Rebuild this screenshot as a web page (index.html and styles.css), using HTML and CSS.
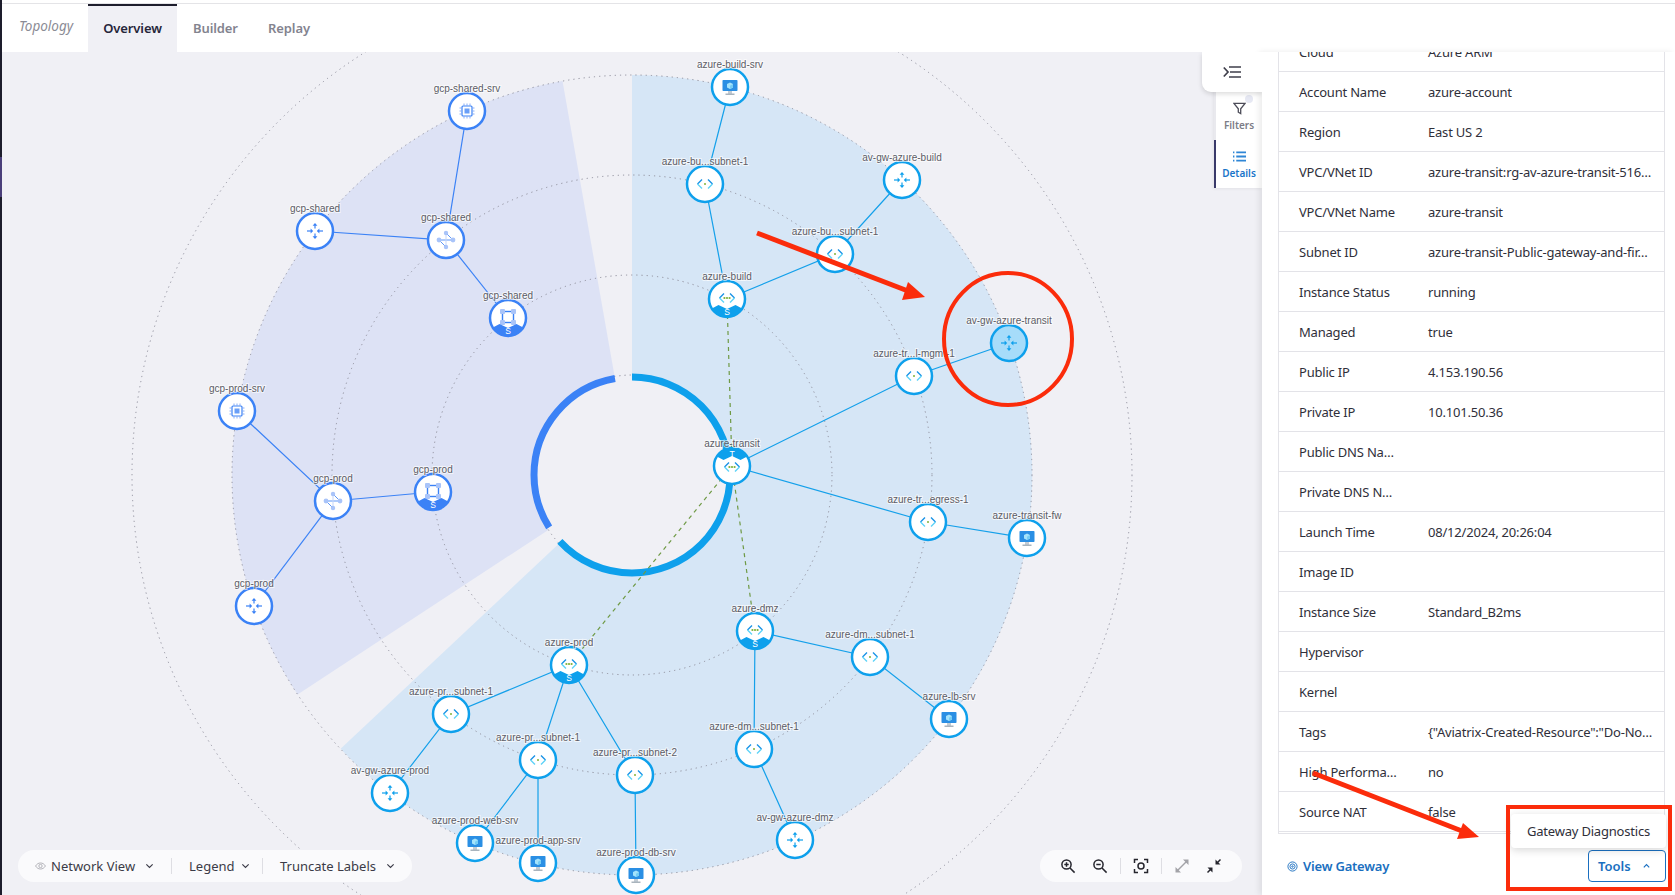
FILE: index.html
```html
<!DOCTYPE html>
<html lang="en">
<head>
    <meta charset="UTF-8">
    <meta name="viewport" content="width=device-width, initial-scale=1.0">
    <title>Topology</title>
    <link rel="stylesheet" href="styles.css">
</head>
<body>
    <div class="strip"></div>
    <div class="page">
        <nav class="tabs">
            <span class="tabs-title">Topology</span>
            <a class="tab active">Overview</a>
            <a class="tab">Builder</a>
            <a class="tab">Replay</a>
        </nav>

        <div class="main">
            <div class="canvas">
                <svg class="graph" viewBox="2 52 1260 843">
                    <defs>
                        <clipPath id="node-clip"><circle r="18"/></clipPath>

                        <g id="i-router" fill="currentColor" stroke="none">
                            <rect x="-0.6" y="-7" width="1.2" height="4.5"/><path d="M-2.4-5.2 0-8 2.4-5.2Z"/>
                            <rect x="-0.6" y="2.5" width="1.2" height="4.5"/><path d="M-2.4 5.2 0 8 2.4 5.2Z"/>
                            <rect x="-8" y="-0.6" width="4.5" height="1.2"/><path d="M-4.4-2.4-1.8 0-4.4 2.4Z"/>
                            <rect x="3.5" y="-0.6" width="4.5" height="1.2"/><path d="M4.4-2.4 1.8 0 4.4 2.4Z"/>
                        </g>
                        <g id="i-chevrons" fill="none" stroke-width="1.4">
                            <path d="M-3-4.5-7.5 0M3-4.5 7.5 0" stroke="#1b93e6"/>
                            <path d="M-7.5 0-3 4.5M7.5 0 3 4.5" stroke="#5fd3f7"/>
                        </g>
                        <g id="i-subnet">
                            <use href="#i-chevrons"/>
                            <circle r="1" fill="#7fb23a"/>
                        </g>
                        <g id="i-vnet">
                            <use href="#i-chevrons"/>
                            <circle cx="-2.6" r="1.1" fill="#7fb23a"/>
                            <circle r="1.1" fill="#7fb23a"/>
                            <circle cx="2.6" r="1.1" fill="#7fb23a"/>
                        </g>
                        <g id="i-server">
                            <rect x="-2" y="4" width="4" height="3" fill="#c3ccd4"/>
                            <rect x="-4.5" y="6.5" width="9" height="1.5" fill="#a9b4bd"/>
                            <rect x="-7.5" y="-7" width="15" height="11" rx="0.8" fill="#2a8fe4"/>
                            <path d="M0-4.6 3-3v3.4L0 2-3 .4V-3Z" fill="#a4e3fb"/>
                            <path d="M0-1.2 3-3v3.4L0 2Z" fill="#74cdf5"/>
                        </g>
                        <g id="i-chip" fill="none" stroke="#3b82f6">
                            <rect x="-5" y="-5" width="10" height="10" rx="1" stroke-width="1.2"/>
                            <rect x="-2.5" y="-2.5" width="5" height="5" fill="#6a9ff8" stroke="none"/>
                            <path d="M-3-5V-7.500M0-5V-7.500M3-5V-7.500M-3 5V7.500M0 5V7.500M3 5V7.500M-5-3H-7.500M-5 0H-7.500M-5 3H-7.500M5-3H7.500M5 0H7.500M5 3H7.500" stroke="#86adf8"/>
                        </g>
                        <g id="i-hub">
                            <path d="M-7 0H7L0-7M-7 0 0 7" fill="none" stroke="#5f97f7"/>
                            <path d="M0-7 0 7" fill="none" stroke="#c5d6fa"/>
                            <circle cx="-7" r="2.4" fill="#a9c4f9"/>
                            <circle cx="7" r="2.4" fill="#a9c4f9"/>
                            <circle cy="-7" r="2.2" fill="#a9c4f9"/>
                            <circle cy="7" r="2.2" fill="#a9c4f9"/>
                        </g>
                        <g id="i-vpc" transform="translate(0 -1)">
                            <rect x="-5.5" y="-5.5" width="11" height="11" fill="none" stroke="#3b82f6" stroke-width="1.4"/>
                            <rect x="-8" y="-8" width="5" height="5" rx="1" fill="#a9c4f9"/>
                            <rect x="3" y="-8" width="5" height="5" rx="1" fill="#a9c4f9"/>
                            <rect x="-8" y="3" width="5" height="5" rx="1" fill="#a9c4f9"/>
                            <rect x="3" y="3" width="5" height="5" rx="1" fill="#a9c4f9"/>
                        </g>
                        <path id="i-cap-s" clip-path="url(#node-clip)" fill="currentColor" d="M-18 11-8.5 6 0 10 8.5 6 18 11V18H-18Z"/>
                        <path id="i-cap-t" clip-path="url(#node-clip)" fill="currentColor" d="M-18-11-8.5-6 0-10 8.5-6 18-11V-18H-18Z"/>
                    </defs>

                    <!-- sectors -->
                    <path class="sector-azure" d="M632 475L632 75A400 400 0 1 1 340.6 748.8Z"/>
                    <path class="sector-gcp" d="M632 475L297.6 694.6A400 400 0 0 1 562.5 81Z"/>

                    <!-- rings -->
                    <circle class="core" cx="632" cy="475" r="100"/>
                    <circle class="ring" cx="632" cy="475" r="100"/>
                    <circle class="ring" cx="632" cy="475" r="200"/>
                    <circle class="ring" cx="632" cy="475" r="300"/>
                    <circle class="ring" cx="632" cy="475" r="400"/>
                    <circle class="ring" cx="632" cy="475" r="500"/>
                    <circle class="donut donut-azure" cx="632" cy="475" r="98" pathLength="360"/>
                    <circle class="donut donut-gcp" cx="632" cy="475" r="98" pathLength="360"/>

                    <!-- links -->
                    <g class="links-azure">
                        <path d="M730 87L705 184L727 299L835 254L902 180"/>
                        <path d="M732 466L914 376L1009 343"/>
                        <path d="M732 466L928 522L1027 538"/>
                        <path d="M755 631L870 657L949 719"/>
                        <path d="M755 631L754 749L795 840"/>
                        <path d="M569 665L451 714L390 793"/>
                        <path d="M569 665L538 760L475 843"/>
                        <path d="M538 760L538 863"/>
                        <path d="M569 665L635 775L636 875"/>
                    </g>
                    <g class="links-gcp">
                        <path d="M467 111L446 240L315 231"/>
                        <path d="M446 240L508 318"/>
                        <path d="M237 411L333 501L433 492"/>
                        <path d="M333 501L254 606"/>
                    </g>
                    <g class="links-peer">
                        <path d="M727 299L732 466"/>
                        <path d="M732 466L755 631"/>
                        <path d="M732 466L569 665"/>
                    </g>

                    <!-- azure nodes -->
                    <g class="node azure" transform="translate(730 87)"><circle r="18"/><use href="#i-server"/><text y="-19.5">azure-build-srv</text></g>
                    <g class="node azure" transform="translate(705 184)"><circle r="18"/><use href="#i-subnet"/><text y="-19.5">azure-bu...subnet-1</text></g>
                    <g class="node azure" transform="translate(902 180)"><circle r="18"/><use href="#i-router"/><text y="-19.5">av-gw-azure-build</text></g>
                    <g class="node azure" transform="translate(835 254)"><circle r="18"/><use href="#i-subnet"/><text y="-19.5">azure-bu...subnet-1</text></g>
                    <g class="node azure" transform="translate(727 299)"><circle r="18"/><use href="#i-cap-s"/><use href="#i-vnet" y="-1"/><text class="cap-text" y="16">S</text><text y="-19.5">azure-build</text></g>
                    <g class="node azure selected" transform="translate(1009 343)"><circle r="18"/><use href="#i-router"/><text y="-19.5">av-gw-azure-transit</text></g>
                    <g class="node azure" transform="translate(914 376)"><circle r="18"/><use href="#i-subnet"/><text y="-19.5">azure-tr...l-mgmt-1</text></g>
                    <g class="node azure" transform="translate(732 466)"><circle r="18"/><use href="#i-cap-t"/><use href="#i-vnet" y="1"/><text class="cap-text" y="-9">T</text><text y="-19.5">azure-transit</text></g>
                    <g class="node azure" transform="translate(928 522)"><circle r="18"/><use href="#i-subnet"/><text y="-19.5">azure-tr...egress-1</text></g>
                    <g class="node azure" transform="translate(1027 538)"><circle r="18"/><use href="#i-server"/><text y="-19.5">azure-transit-fw</text></g>
                    <g class="node azure" transform="translate(755 631)"><circle r="18"/><use href="#i-cap-s"/><use href="#i-vnet" y="-1"/><text class="cap-text" y="16">S</text><text y="-19.5">azure-dmz</text></g>
                    <g class="node azure" transform="translate(870 657)"><circle r="18"/><use href="#i-subnet"/><text y="-19.5">azure-dm...subnet-1</text></g>
                    <g class="node azure" transform="translate(949 719)"><circle r="18"/><use href="#i-server"/><text y="-19.5">azure-lb-srv</text></g>
                    <g class="node azure" transform="translate(754 749)"><circle r="18"/><use href="#i-subnet"/><text y="-19.5">azure-dm...subnet-1</text></g>
                    <g class="node azure" transform="translate(795 840)"><circle r="18"/><use href="#i-router"/><text y="-19.5">av-gw-azure-dmz</text></g>
                    <g class="node azure" transform="translate(569 665)"><circle r="18"/><use href="#i-cap-s"/><use href="#i-vnet" y="-1"/><text class="cap-text" y="16">S</text><text y="-19.5">azure-prod</text></g>
                    <g class="node azure" transform="translate(451 714)"><circle r="18"/><use href="#i-subnet"/><text y="-19.5">azure-pr...subnet-1</text></g>
                    <g class="node azure" transform="translate(538 760)"><circle r="18"/><use href="#i-subnet"/><text y="-19.5">azure-pr...subnet-1</text></g>
                    <g class="node azure" transform="translate(635 775)"><circle r="18"/><use href="#i-subnet"/><text y="-19.5">azure-pr...subnet-2</text></g>
                    <g class="node azure" transform="translate(390 793)"><circle r="18"/><use href="#i-router"/><text y="-19.5">av-gw-azure-prod</text></g>
                    <g class="node azure" transform="translate(475 843)"><circle r="18"/><use href="#i-server"/><text y="-19.5">azure-prod-web-srv</text></g>
                    <g class="node azure" transform="translate(538 863)"><circle r="18"/><use href="#i-server"/><text y="-19.5">azure-prod-app-srv</text></g>
                    <g class="node azure" transform="translate(636 875)"><circle r="18"/><use href="#i-server"/><text y="-19.5">azure-prod-db-srv</text></g>

                    <!-- gcp nodes -->
                    <g class="node gcp" transform="translate(467 111)"><circle r="18"/><use href="#i-chip"/><text y="-19.5">gcp-shared-srv</text></g>
                    <g class="node gcp" transform="translate(315 231)"><circle r="18"/><use href="#i-router"/><text y="-19.5">gcp-shared</text></g>
                    <g class="node gcp" transform="translate(446 240)"><circle r="18"/><use href="#i-hub"/><text y="-19.5">gcp-shared</text></g>
                    <g class="node gcp" transform="translate(508 318)"><circle r="18"/><use href="#i-vpc"/><use href="#i-cap-s"/><text class="cap-text" y="16">S</text><text y="-19.5">gcp-shared</text></g>
                    <g class="node gcp" transform="translate(237 411)"><circle r="18"/><use href="#i-chip"/><text y="-19.5">gcp-prod-srv</text></g>
                    <g class="node gcp" transform="translate(333 501)"><circle r="18"/><use href="#i-hub"/><text y="-19.5">gcp-prod</text></g>
                    <g class="node gcp" transform="translate(433 492)"><circle r="18"/><use href="#i-vpc"/><use href="#i-cap-s"/><text class="cap-text" y="16">S</text><text y="-19.5">gcp-prod</text></g>
                    <g class="node gcp" transform="translate(254 606)"><circle r="18"/><use href="#i-router"/><text y="-19.5">gcp-prod</text></g>
                </svg>

                <div class="toolbar toolbar-left">
                    <button class="tb-item tb-network">
                        <svg class="eye" viewBox="0 0 12 8"><path d="M.6 4C2 1.800 3.800.7 6 .7S10 1.800 11.400 4C10 6.200 8.200 7.300 6 7.300S2 6.200.6 4Z"/><circle cx="6" cy="4" r="1.800"/></svg>
                        Network View
                        <svg class="chev chev-wide" viewBox="0 0 10 6"><path d="M1.500 1.200 5 4.500l3.500-3.300"/></svg>
                    </button>
                    <span class="tb-sep"></span>
                    <button class="tb-item tb-legend">
                        Legend
                        <svg class="chev" viewBox="0 0 10 6"><path d="M1.500 1.200 5 4.500l3.500-3.300"/></svg>
                    </button>
                    <span class="tb-sep"></span>
                    <button class="tb-item tb-truncate">
                        Truncate Labels
                        <svg class="chev chev-wide" viewBox="0 0 10 6"><path d="M1.500 1.200 5 4.500l3.500-3.300"/></svg>
                    </button>
                </div>

                <div class="toolbar toolbar-right">
                    <button class="tool"><svg viewBox="0 0 16 16"><circle cx="6.500" cy="6.500" r="4.600"/><path d="M10 10l4.600 4.600M4.300 6.500h4.400M6.500 4.300v4.400"/></svg></button>
                    <button class="tool"><svg viewBox="0 0 16 16"><circle cx="6.500" cy="6.500" r="4.600"/><path d="M10 10l4.600 4.600M4.300 6.500h4.400"/></svg></button>
                    <span class="tb-sep"></span>
                    <button class="tool"><svg viewBox="0 0 16 16"><path d="M1.500 5V1.500H5M11 1.500h3.500V5M14.500 11v3.500H11M5 14.500H1.500V11"/><circle cx="8" cy="8" r="3"/></svg></button>
                    <span class="tb-sep"></span>
                    <button class="tool tool-off"><svg viewBox="0 0 16 16"><path d="M3.500 12.500l9-9"/><path class="solid" d="M9 1.500h5.500V7ZM7 14.500H1.500V9Z"/></svg></button>
                    <button class="tool"><svg viewBox="0 0 16 16"><path d="M1.500 14.500l4-4M10.500 5.500l4-4"/><path class="solid" d="M9.500 1.500v5h5ZM1.500 9.500h5v5Z"/></svg></button>
                </div>

                <div class="rail">
                    <button class="rail-toggle">
                        <svg viewBox="0 0 18 12"><path d="M6 1h12M7 6h11M6 11h12M.8 1.500 5 6 .8 10.500"/></svg>
                    </button>
                    <div class="rail-tab">
                        <span class="rail-dot"></span>
                        <svg class="rail-icon" viewBox="0 0 14 14"><path d="M1 1.500h12L8.300 7.300V12.500L5.700 11V7.300Z"/></svg>
                        <span>Filters</span>
                    </div>
                    <div class="rail-tab current">
                        <svg class="rail-icon" viewBox="0 0 14 12"><path d="M3.500 1.500H14M3.500 6H14M3.500 10.500H14M0 1.500h1.500M0 6h1.500M0 10.500h1.500"/></svg>
                        <span>Details</span>
                    </div>
                </div>
            </div>

            <aside class="panel">
                <div class="props">
                    <div class="props-list">
                        <div class="row"><span class="key">Cloud</span><span class="val">Azure ARM</span></div>
                        <div class="row"><span class="key">Account Name</span><span class="val">azure-account</span></div>
                        <div class="row"><span class="key">Region</span><span class="val">East US 2</span></div>
                        <div class="row"><span class="key">VPC/VNet ID</span><span class="val">azure-transit:rg-av-azure-transit-516…</span></div>
                        <div class="row"><span class="key">VPC/VNet Name</span><span class="val">azure-transit</span></div>
                        <div class="row"><span class="key">Subnet ID</span><span class="val">azure-transit-Public-gateway-and-fir…</span></div>
                        <div class="row"><span class="key">Instance Status</span><span class="val">running</span></div>
                        <div class="row"><span class="key">Managed</span><span class="val">true</span></div>
                        <div class="row"><span class="key">Public IP</span><span class="val">4.153.190.56</span></div>
                        <div class="row"><span class="key">Private IP</span><span class="val">10.101.50.36</span></div>
                        <div class="row"><span class="key">Public DNS Na…</span><span class="val"></span></div>
                        <div class="row"><span class="key">Private DNS N…</span><span class="val"></span></div>
                        <div class="row"><span class="key">Launch Time</span><span class="val">08/12/2024, 20:26:04</span></div>
                        <div class="row"><span class="key">Image ID</span><span class="val"></span></div>
                        <div class="row"><span class="key">Instance Size</span><span class="val">Standard_B2ms</span></div>
                        <div class="row"><span class="key">Hypervisor</span><span class="val"></span></div>
                        <div class="row"><span class="key">Kernel</span><span class="val"></span></div>
                        <div class="row"><span class="key">Tags</span><span class="val">{"Aviatrix-Created-Resource":"Do-No…</span></div>
                        <div class="row"><span class="key">High Performa…</span><span class="val">no</span></div>
                        <div class="row"><span class="key">Source NAT</span><span class="val">false</span></div>
                    </div>
                </div>
                <div class="panel-foot">
                    <a class="view-link">
                        <svg viewBox="0 0 12 12"><circle cx="6" cy="6" r="5"/><circle cx="6" cy="6" r="2.800"/><circle cx="6" cy="6" r="0.800"/></svg>
                        View Gateway
                    </a>
                    <button class="tools-btn">
                        Tools
                        <svg viewBox="0 0 10 6"><path d="M2 4.500 5 1.500l3 3"/></svg>
                    </button>
                    <div class="tools-menu">Gateway Diagnostics</div>
                </div>
            </aside>
        </div>
    </div>

    <!-- red markup drawn on top of the screenshot -->
    <svg class="markup" viewBox="0 0 1675 895">
        <ellipse cx="1008" cy="339" rx="64" ry="66"/>
        <path d="M757 233L908 291"/>
        <path class="head" d="M925 297L902 300L908 282Z"/>
        <path d="M1313 773L1462 831"/>
        <path class="head" d="M1479 837L1457 839L1463 823Z"/>
        <rect x="1508" y="807" width="162" height="82"/>
    </svg>
</body>
</html>
```

FILE: styles.css
```css
* {
    box-sizing: border-box;
}
body {
    font-family: "Noto Sans", Arial, sans-serif;
    font-size: 13px;
    color: #2f2f3a;
    background-color: #fff;
    margin: 0;
    height: 100vh;
    display: flex;
    overflow: hidden;
}
button {
    font: inherit;
    color: inherit;
    background: none;
    border: none;
    padding: 0;
    cursor: pointer;
}
.strip {
    width: 2px;
    background: linear-gradient(#1d1d2c 157px, #4a3f7a 157px, #4a3f7a 197px, #1d1d2c 197px);
}
.page {
    flex: 1;
    min-width: 0;
    display: flex;
    flex-direction: column;
}

/* top tabs */
.tabs {
    height: 49px;
    flex: none;
    display: flex;
    margin-top: 3px;
    border-top: 1px solid #e4e4e7;
}
.tabs-title {
    width: 86px;
    padding-left: 17px;
    line-height: 45px;
    font-style: italic;
    font-size: 13.5px;
    color: #8b8b95;
}
.tab {
    line-height: 45px;
    font-weight: 600;
    letter-spacing: -0.1px;
    color: #83838f;
    padding: 0 16px;
    border-top: 2px solid transparent;
}
.tab.active {
    width: 89px;
    text-align: center;
    background-color: #f0f0f5;
    border-top-color: #1d1d2c;
    color: #26263a;
    padding: 0;
}
.tab:nth-child(3) {
    width: 75px;
}

/* canvas */
.main {
    flex: 1;
    min-height: 0;
    display: flex;
}
.canvas {
    position: relative;
    flex: 1;
    background-color: #f0f0f5;
    overflow: hidden;
}
.graph {
    display: block;
    width: 100%;
    height: 100%;
}
.sector-azure {
    fill: #d6e6f6;
}
.sector-gcp {
    fill: #dde2f5;
}
.core {
    fill: #f0f0f5;
}
.ring {
    fill: none;
    stroke: #8f8f9c;
    stroke-width: 1;
    stroke-dasharray: 1.2 4;
}
.donut {
    fill: none;
    stroke-width: 7;
    transform: rotate(-90deg);
    transform-origin: 632px 475px;
}
.donut-azure {
    stroke: #0ea0ec;
    stroke-dasharray: 227.4 360;
}
.donut-gcp {
    stroke: #3b82f6;
    stroke-dasharray: 112.3 360;
    stroke-dashoffset: -237.7;
}
.links-azure path, .links-gcp path, .links-peer path {
    fill: none;
    stroke-width: 1.2;
}
.links-azure path {
    stroke: #14a0ea;
}
.links-gcp path {
    stroke: #3b82f6;
}
.links-peer path {
    stroke: #6f9a45;
    stroke-dasharray: 4 4;
}
.node > circle {
    fill: #fff;
    stroke-width: 2.5;
}
.node.azure {
    color: #0ea0ec;
}
.node.azure > circle {
    stroke: #0ea0ec;
}
.node.gcp {
    color: #3b82f6;
}
.node.gcp > circle {
    stroke: #3b82f6;
}
.node.selected > circle {
    fill: #a6dcfa;
}
.node text {
    font-family: "Liberation Sans", Arial, sans-serif;
    font-size: 10px;
    text-anchor: middle;
    fill: #5c5c66;
    stroke: rgba(255, 255, 255, 0.65);
    stroke-width: 2px;
    paint-order: stroke;
}
.node text.cap-text {
    font-size: 8.5px;
    fill: #fff;
    stroke: none;
}

/* floating toolbars */
.toolbar {
    position: absolute;
    bottom: 13px;
    height: 32px;
    display: flex;
    align-items: center;
    background-color: #fafafc;
    border-radius: 16px;
}
.toolbar-left {
    left: 16px;
    width: 394px;
}
.toolbar-right {
    left: 1038px;
    padding: 0 12px;
}
.tb-sep {
    width: 1px;
    height: 16px;
    background-color: #dedee3;
    margin: 0 4px;
}
.tb-item {
    display: flex;
    align-items: center;
    color: #3b3b47;
}
.tb-network {
    width: 153px;
    padding-left: 17px;
}
.tb-legend {
    width: 90px;
    padding-left: 17px;
}
.tb-truncate {
    width: 149px;
    padding-left: 17px;
}
.toolbar-left .tb-sep {
    margin: 0;
}
.eye {
    width: 11px;
    height: 8px;
    margin-right: 5px;
    fill: none;
    stroke: #a5a5ad;
    stroke-width: 0.9;
}
.chev {
    width: 9px;
    height: 6px;
    margin-left: 6px;
    fill: none;
    stroke: #3b3b47;
    stroke-width: 1.3;
}
.chev-wide {
    margin-left: auto;
    margin-right: 17px;
}
.tool {
    width: 32px;
    height: 32px;
    display: flex;
    align-items: center;
    justify-content: center;
}
.tool svg {
    width: 16px;
    height: 16px;
    fill: none;
    stroke: #26262e;
    stroke-width: 1.5;
}
.tool .solid {
    fill: #26262e;
    stroke: none;
}
.tool-off svg {
    stroke: #a3a3a8;
}
.tool-off .solid {
    fill: #a3a3a8;
}

/* side rail */
.rail {
    position: absolute;
    top: 0;
    right: 0;
    width: 48px;
    padding-top: 40px;
    background-color: #fff;
    box-shadow: -1px 1px 3px rgba(0, 0, 0, 0.06);
}
.rail-toggle {
    position: absolute;
    top: 0;
    left: -12px;
    width: 60px;
    height: 40px;
    background-color: #fff;
    border-bottom-left-radius: 9px;
    box-shadow: 0 2px 5px rgba(0, 0, 0, 0.14);
    display: flex;
    align-items: center;
    justify-content: center;
    z-index: 1;
}
.rail-toggle svg {
    width: 18px;
    height: 12px;
    fill: none;
    stroke: #3f3f4b;
    stroke-width: 1.7;
}
.rail-tab {
    position: relative;
    height: 48px;
    padding-top: 2px;
    display: flex;
    flex-direction: column;
    align-items: center;
    justify-content: center;
    gap: 3px;
    font-size: 10px;
    font-weight: 600;
    color: #7c7c86;
    border-left: 2px solid #e9e9ee;
}
.rail-tab.current {
    color: #1a75c9;
    border-left-color: #3a3a6a;
}
.rail-icon {
    width: 13px;
    height: 13px;
    fill: none;
    stroke: #4c4c58;
    stroke-width: 1.4;
}
.current .rail-icon {
    stroke: #2f86d6;
    stroke-width: 2;
}
.rail-dot {
    position: absolute;
    top: 3px;
    left: 29px;
    width: 8px;
    height: 8px;
    border-radius: 50%;
    background-color: #e6e8f3;
}

/* details panel */
.panel {
    width: 413px;
    flex: none;
    display: flex;
    flex-direction: column;
    letter-spacing: -0.2px;
    background-color: #fff;
    box-shadow: -3px 0 6px rgba(0, 0, 0, 0.08);
    position: relative;
}
.props {
    height: 782px;
    flex: none;
    margin: 0 10px 0 16px;
    overflow: hidden;
    border-left: 1px solid #e3e3e8;
    border-right: 1px solid #e3e3e8;
    border-bottom: 1px solid #e3e3e8;
}
.props-list {
    margin-top: -20px;
}
.row {
    height: 40px;
    display: flex;
    align-items: center;
    border-bottom: 1px solid #e3e3e8;
    white-space: nowrap;
}
.key {
    width: 149px;
    padding-left: 20px;
    flex: none;
}
.panel-foot {
    position: relative;
    flex: 1;
    display: flex;
    align-items: center;
    justify-content: space-between;
    padding: 3px 9px 0 25px;
}
.view-link {
    display: flex;
    align-items: center;
    gap: 5px;
    font-weight: 600;
    color: #1a6fc0;
}
.view-link svg {
    width: 11px;
    height: 11px;
    fill: none;
    stroke: #1a6fc0;
    stroke-width: 1;
}
.tools-btn {
    width: 78px;
    height: 32px;
    padding: 0 14px 0 9px;
    display: flex;
    align-items: center;
    justify-content: space-between;
    font-weight: 600;
    color: #1a6fc0;
    border: 1px solid #1a6fc0;
    border-radius: 4px;
}
.tools-btn svg {
    width: 9px;
    height: 6px;
    fill: none;
    stroke: #1a6fc0;
    stroke-width: 1.3;
}
.tools-menu {
    position: absolute;
    right: 9px;
    bottom: 47px;
    width: 155px;
    height: 34px;
    line-height: 34px;
    text-align: center;
    background-color: #fff;
    border-radius: 4px;
    box-shadow: 0 2px 8px rgba(0, 0, 0, 0.16);
}

/* annotations */
.markup {
    position: absolute;
    top: 0;
    left: 0;
    width: 1675px;
    height: 895px;
    pointer-events: none;
    fill: none;
    stroke: #fb2c0b;
    stroke-width: 4;
}
.markup path {
    stroke-width: 5;
}
.markup .head {
    fill: #fb2c0b;
    stroke: none;
}
```
